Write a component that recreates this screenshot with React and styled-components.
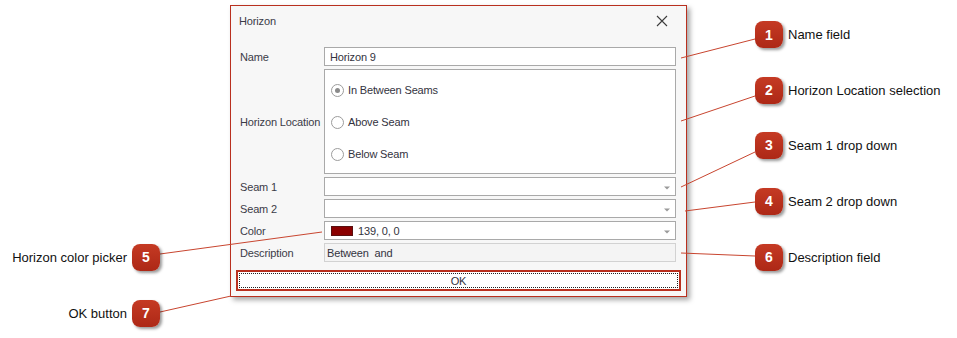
import React from "react";
import styled, { createGlobalStyle } from "styled-components";

const GlobalStyle = createGlobalStyle`
    html, body {
        margin    : 0;
        padding   : 0;
        background: #ffffff;
    }
    body {
        font-family: "Liberation Sans", Arial, sans-serif;
    }
`;

const RED = "#b9301f";

const callouts = [
    { n: 1, text: "Name field",                 side: "right", cy: 34.5 },
    { n: 2, text: "Horizon Location selection", side: "right", cy: 90 },
    { n: 3, text: "Seam 1 drop down",           side: "right", cy: 145 },
    { n: 4, text: "Seam 2 drop down",           side: "right", cy: 201 },
    { n: 6, text: "Description field",          side: "right", cy: 257 },
    { n: 5, text: "Horizon color picker",       side: "left",  cy: 257 },
    { n: 7, text: "OK button",                  side: "left",  cy: 313 },
];

const leaders = [
    [681, 58, 755, 39],
    [681, 121, 755, 96],
    [681, 187, 755, 152],
    [685, 211, 755, 202],
    [681, 253, 755, 256],
    [160, 254, 322, 232],
    [160, 312, 231, 296],
];

function DropArrow() {
    return (
        <Arrow width="6" height="4" viewBox="0 0 6 4">
            <path d="M0 0.5 L6 0.5 L3 3.5 Z" fill="#9a9a9a" />
        </Arrow>
    );
}

function Radio({ checked, label }) {
    return (
        <RadioRow>
            <RadioCircle>{checked && <RadioDot />}</RadioCircle>
            {label}
        </RadioRow>
    );
}

export default function App() {
    return (
        <Page>
            <GlobalStyle />

            <Dialog>
                <TitleBar>
                    <Title>Horizon</Title>
                    <CloseIcon width="12" height="12" viewBox="0 0 12 12">
                        <path d="M1 1 L11 11 M11 1 L1 11" stroke="#3c3c3c" strokeWidth="1.1" />
                    </CloseIcon>
                </TitleBar>

                <Form>
                    <Label>Name</Label>
                    <Field>Horizon 9</Field>

                    <Label>Horizon Location</Label>
                    <RadioGroup>
                        <Radio checked label="In Between Seams" />
                        <Radio label="Above Seam" />
                        <Radio label="Below Seam" />
                    </RadioGroup>

                    <Label>Seam 1</Label>
                    <Field><DropArrow /></Field>

                    <Label>Seam 2</Label>
                    <Field><DropArrow /></Field>

                    <Label>Color</Label>
                    <Field $pad="6px">
                        <Swatch $color="rgb(139, 0, 0)" />
                        139, 0, 0
                        <DropArrow />
                    </Field>

                    <Label>Description</Label>
                    <Field $readOnly>Between  and</Field>
                </Form>

                <Footer>
                    <OkButton>
                        <FocusRing>OK</FocusRing>
                    </OkButton>
                </Footer>
            </Dialog>

            <Leaders width="957" height="338" viewBox="0 0 957 338">
                {leaders.map(([x1, y1, x2, y2], i) => (
                    <line key={i} x1={x1} y1={y1} x2={x2} y2={y2} stroke="#c8452f" strokeWidth="1" />
                ))}
            </Leaders>

            {callouts.map((c) => (
                <Callout key={c.n} $side={c.side} $top={c.cy - 13.5}>
                    <Badge>{c.n}</Badge>
                    <CalloutText>{c.text}</CalloutText>
                </Callout>
            ))}
        </Page>
    );
}

const Page = styled.div`
    position  : relative;
    width     : 957px;
    height    : 338px;
    padding   : 5px 0 0 230px;
    box-sizing: border-box;
    overflow  : hidden;
`;

const Dialog = styled.div`
    width     : 457px;
    height    : 292px;
    box-sizing: border-box;

    display       : flex;
    flex-direction: column;

    background: #f7f7f7;
    border    : 1px solid ${RED};
    box-shadow: 3px 3px 5px rgba(0, 0, 0, 0.35);

    font-size     : 11px;
    letter-spacing: -0.15px;
    color         : #3b3b47;
`;

const TitleBar = styled.div`
    height     : 30px;
    display    : flex;
    align-items: center;
    justify-content: space-between;
    padding    : 0 18px 0 8px;
`;

const Title = styled.div`
    font-size: 11px;
    color    : #3b3b47;
`;

const CloseIcon = styled.svg`
    display: block;
`;

const Form = styled.div`
    display              : grid;
    grid-template-columns: 84px 1fr;
    row-gap              : 3px;
    align-items          : center;
    padding              : 11px 10px 0 9px;
`;

const Label = styled.div`
    white-space: nowrap;
    color      : #3b3b47;
`;

const Field = styled.div`
    position   : relative;
    height     : 19px;
    box-sizing : border-box;
    display    : flex;
    align-items: center;
    padding    : 0 ${(p) => p.$pad || (p.$readOnly ? "2px" : "5px")};
    white-space: pre;

    background: ${(p) => (p.$readOnly ? "#f4f4f4" : "#ffffff")};
    border    : 1px solid ${(p) => (p.$readOnly ? "#d2d2d2" : "#a9a9a9")};
    color     : #333340;
`;

const Arrow = styled.svg`
    position : absolute;
    right    : 5px;
    top      : 8px;
`;

const Swatch = styled.span`
    width       : 22px;
    height      : 10px;
    box-sizing  : border-box;
    margin-right: 5px;
    background  : ${(p) => p.$color};
    border      : 1px solid #5a1010;
`;

const RadioGroup = styled.div`
    height        : 105px;
    box-sizing    : border-box;
    display       : flex;
    flex-direction: column;
    padding       : 4px 0 3px 6px;

    background: #ffffff;
    border    : 1px solid #a9a9a9;
`;

const RadioRow = styled.div`
    height     : 32px;
    display    : flex;
    align-items: center;
    gap        : 4px;
    color      : #333340;
`;

const RadioCircle = styled.span`
    width          : 13px;
    height         : 13px;
    box-sizing     : border-box;
    border-radius  : 50%;
    border         : 1px solid #9c9c9c;
    background     : #ffffff;
    display        : flex;
    align-items    : center;
    justify-content: center;
`;

const RadioDot = styled.span`
    width        : 5px;
    height       : 5px;
    border-radius: 50%;
    background   : #8a8a8a;
`;

const Footer = styled.div`
    padding: 8px 5px 0 5px;
`;

const OkButton = styled.div`
    height    : 21px;
    box-sizing: border-box;
    padding   : 1px;
    background: #ffffff;
    border    : 2px solid ${RED};
`;

const FocusRing = styled.div`
    height         : 100%;
    box-sizing     : border-box;
    border         : 1px dotted #202020;
    display        : flex;
    align-items    : center;
    justify-content: center;
    color          : #333340;
    font-size      : 11px;
`;

const Leaders = styled.svg`
    position      : absolute;
    left          : 0;
    top           : 0;
    pointer-events: none;
`;

const Callout = styled.div`
    position      : absolute;
    top           : ${(p) => p.$top}px;
    ${(p) => (p.$side === "left" ? "right: 797px;" : "left: 755px;")}
    display       : flex;
    flex-direction: ${(p) => (p.$side === "left" ? "row-reverse" : "row")};
    align-items   : center;
    gap           : 5px;
`;

const Badge = styled.div`
    width          : 28px;
    height         : 27px;
    border-radius  : 8px;
    display        : flex;
    align-items    : center;
    justify-content: center;

    background: linear-gradient(180deg, #c53a24 0%, #ad2816 100%);
    box-shadow: 2px 2px 3px rgba(0, 0, 0, 0.4);

    color      : #ffffff;
    font-weight: bold;
    font-size  : 14px;
    font-family: "Liberation Sans", Arial, sans-serif;
`;

const CalloutText = styled.div`
    font-size  : 13px;
    color      : #111111;
    white-space: nowrap;
    font-family: "Liberation Sans", Arial, sans-serif;
`;
